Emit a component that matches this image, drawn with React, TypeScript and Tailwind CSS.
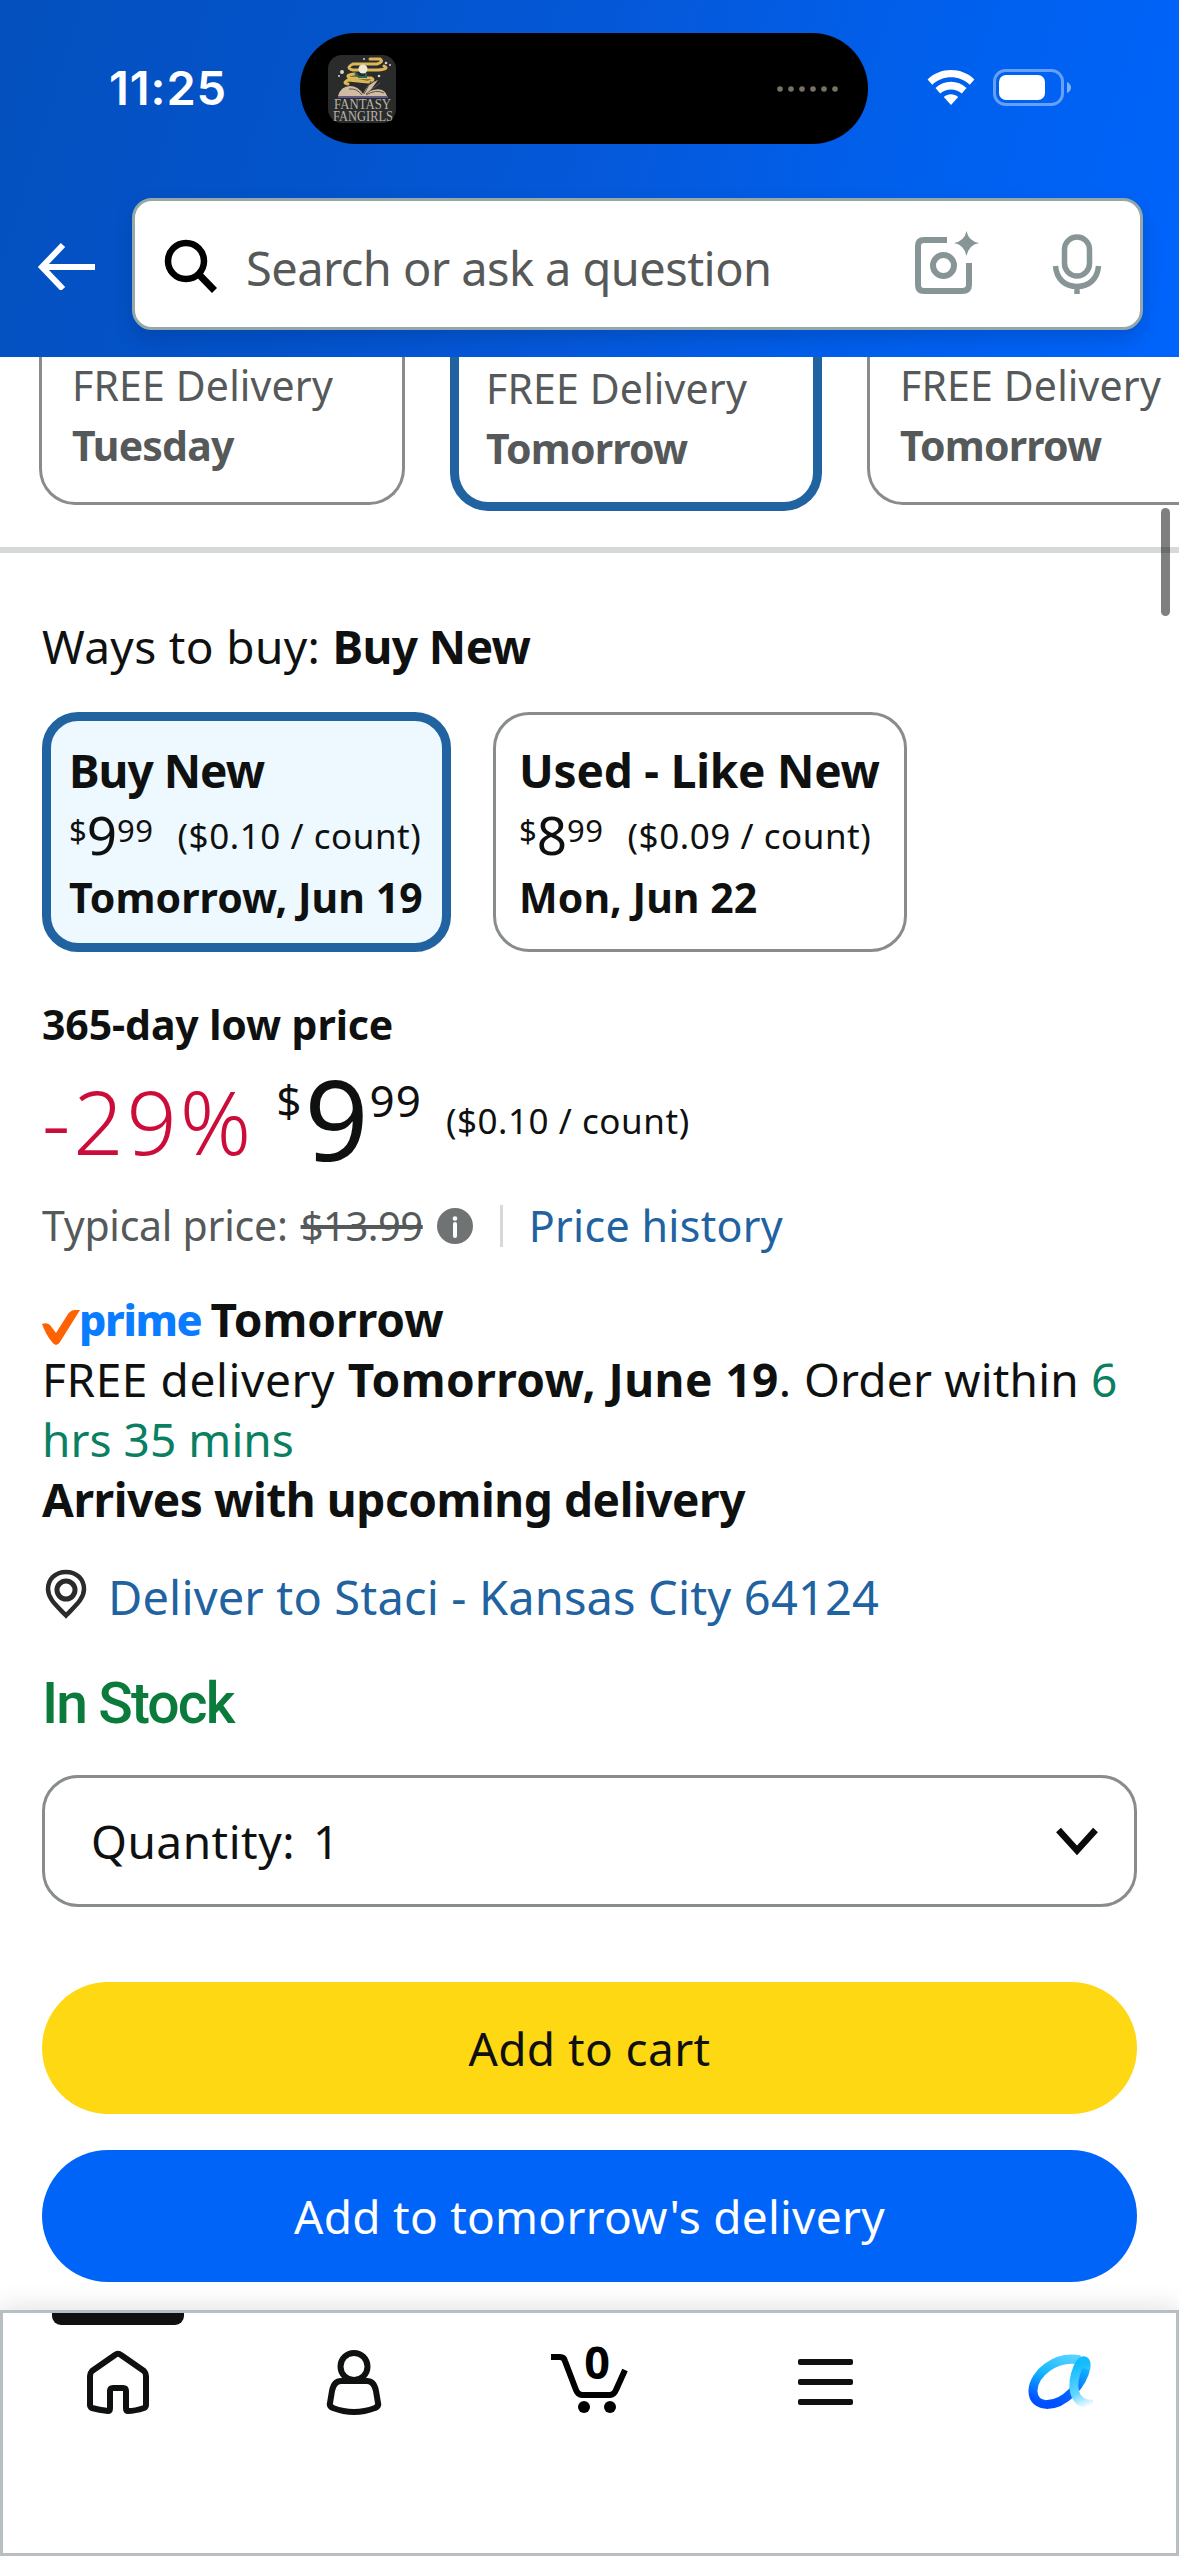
import { ReactNode } from "react";

const otherOffers = [
  { when: "Tuesday", selected: false },
  { when: "Tomorrow", selected: true },
  { when: "Tomorrow", selected: false },
];

const buyOptions = [
  { title: "Buy New", whole: "9", cents: "99", unit: "($0.10 / count)", date: "Tomorrow, Jun 19", selected: true },
  { title: "Used - Like New", whole: "8", cents: "99", unit: "($0.09 / count)", date: "Mon, Jun 22", selected: false },
];

export default function App() {
  return (
    <div className="relative flex h-[2556px] w-[1179px] flex-col overflow-hidden bg-white font-['Noto_Sans',sans-serif] text-[#0f1111]">
      <Header />
      <OfferStrip />
      <main className="flex flex-1 flex-col px-[42px]">
        <h2 className="mt-[63px] text-[46px] leading-[60px] tracking-[0.35px] whitespace-nowrap">
          Ways to buy: <b className="tracking-[-0.6px]">Buy New</b>
        </h2>
        <div className="mt-[36px] flex gap-[42px]">
          {buyOptions.map((option) => (
            <BuyBox key={option.title} {...option} />
          ))}
        </div>
        <PriceBlock />
        <Delivery />
        <div className="mt-[43px] font-[Roboto,sans-serif] text-[57px] leading-[68px] font-medium tracking-[-1.9px] text-[#0b7b3c]">
          In Stock
        </div>
        <div className="mt-[37px] flex h-[132px] items-center justify-between rounded-[36px] border-[3px] border-[#888c8c] pr-[36px] pl-[46px]">
          <span className="text-[46px] tracking-[0.5px] whitespace-pre">
            Quantity:<span className="ml-[18px]">1</span>
          </span>
          <svg className="mt-[2px] h-[32px] w-[42px]" viewBox="0 0 42 32" fill="none" stroke="#0a0a0a" strokeWidth="6.5">
            <path d="M2.500 4L21 24.500L39.500 4" />
          </svg>
        </div>
        <button className="mt-[75px] h-[132px] rounded-full bg-[#ffd814] text-[46px] tracking-[0.4px]">Add to cart</button>
        <button className="mt-[36px] h-[132px] rounded-full bg-[#0064f9] text-[46px] tracking-[0.25px] text-white">
          Add to tomorrow's delivery
        </button>
      </main>
      <div className="absolute top-[508px] right-[9px] h-[108px] w-[9px] rounded-full bg-black/50" />
      <TabBar />
    </div>
  );
}

function Header() {
  return (
    <header className="h-[357px] shrink-0 bg-[linear-gradient(107deg,#0450be_0%,#0353cb_28%,#0559db_52%,#0060ee_76%,#0064fc_100%)]">
      <div className="flex h-[198px] items-start">
        <div className="mt-[59px] w-[300px] pl-[109px] font-[Inter,sans-serif] text-[47px] leading-[57px] font-semibold tracking-[0.9px] text-white">
          11:25
        </div>
        <div className="mt-[33px] flex h-[111px] w-[568px] items-center justify-between rounded-full bg-black pr-[29px] pl-[28px]">
          <PodcastArt />
          <svg className="h-[8px] w-[64px]" viewBox="0 0 64 8" fill="#787266">
            {[5, 16, 27, 38, 49, 60].map((x) => (
              <circle key={x} cx={x} cy="4" r="2.800" />
            ))}
          </svg>
        </div>
        <svg className="mt-[68px] ml-[58px] h-[38px] w-[50px]" viewBox="0 0 50 38" fill="white">
          <path d="M1.600 11.500C14-1.200 36-1.200 48.400 11.500L43.800 16.800C33.500 6.800 16.500 6.800 6.200 16.800Z" />
          <path d="M9.500 20C18 11.800 32 11.800 40.500 20L35.800 25.500C29.500 20 20.500 20 14.200 25.500Z" />
          <path d="M17.800 29C22 25.300 28 25.300 32.200 29L25 37Z" />
        </svg>
        <svg className="mt-[69px] ml-[17px] h-[37px] w-[78px]" viewBox="0 0 78 37">
          <rect x="1.500" y="1.500" width="68" height="34" rx="11" fill="none" stroke="white" strokeOpacity="0.400" strokeWidth="3" />
          <rect x="6" y="6" width="46" height="25" rx="7" fill="white" />
          <path d="M74 13Q78 15 78 18.500Q78 22 74 24Z" fill="white" fillOpacity="0.500" />
        </svg>
      </div>
      <div className="flex items-center pl-[37px]">
        <svg className="mt-[4px] h-[48px] w-[58px]" viewBox="0 0 58 48" fill="none" stroke="white" strokeWidth="6">
          <path d="M58 25H5M26 3L5 25L26 47" />
        </svg>
        <div className="ml-[37px] flex h-[132px] w-[1011px] items-center rounded-[20px] border-[3px] border-[#95a8a8] bg-white pl-[28px] text-[#575959] shadow-[0_9px_18px_rgba(0,40,110,0.25)]">
          <svg className="h-[58px] w-[56px]" viewBox="0 0 56 58" fill="none" stroke="black" strokeWidth="6.500">
            <circle cx="23" cy="26" r="18" />
            <path d="M36 39.500L51.500 55.500" strokeWidth="7" />
          </svg>
          <span className="mt-[9px] ml-[27px] flex-1 text-[47px] tracking-[-0.58px] whitespace-nowrap">
            Search or ask a question
          </span>
          <svg className="h-[66px] w-[66px]" viewBox="0 0 66 66" fill="none" stroke="#879596" strokeWidth="6">
            <path d="M33 9H10Q4 9 4 15V54Q4 60 10 60H48Q55 60 55 54V32" />
            <circle cx="29.500" cy="34.500" r="10.500" />
            <path d="M52.500 0Q54.500 10 65 12Q54.500 14 52.500 25Q50.500 14 40 12Q50.500 10 52.500 0Z" fill="#879596" stroke="none" />
          </svg>
          <svg className="mr-[38px] ml-[72px] h-[62px] w-[50px]" viewBox="0 0 50 62" fill="none" stroke="#879596" strokeWidth="5.500">
            <rect x="12.500" y="4" width="25" height="39" rx="12.500" />
            <path d="M3.500 33C4.500 46 13 53.500 25 53.500S45.500 46 46.500 33M25 53V61" />
          </svg>
        </div>
      </div>
    </header>
  );
}

function PodcastArt() {
  return (
    <svg className="h-[68px] w-[68px] overflow-visible" viewBox="0 0 68 68">
      <rect width="68" height="68" rx="14" fill="#2a2c2c" />
      <g fill="none" stroke="#dcb757" strokeWidth="3" strokeLinecap="round">
        <path d="M42 4H52Q56 7 49 9H25Q17 13 25 15H50Q62 14 56 11" />
        <path d="M27 19Q16 20 22 23H43Q48 25 40 27L20 25Q14 28 20 29" />
      </g>
      <circle cx="35" cy="14" r="4.500" fill="#f0e8d5" />
      <path d="M27 18L31 22H38V18" fill="none" stroke="#28685a" strokeWidth="2" />
      <path d="M10 41Q13 31 22 31Q30 31 35 39Q39 29 50 25L42 36Q56 31 59 41Z" fill="#d0bba5" />
      <path d="M36 39L43 26M38 39L52 28M34 40Q29 33 21 34M38 40Q48 34 56 38" stroke="#5f5349" fill="none" />
      <path d="M10 42H60" stroke="#7368a0" strokeWidth="1.500" />
      <g fill="#d8d1c8">
        <circle cx="14" cy="17" r="2" />
        <circle cx="11" cy="21" r="1" />
        <circle cx="36" cy="4" r="1" />
        <circle cx="58" cy="8" r="1.300" />
        <circle cx="62" cy="10" r="1" />
        <circle cx="51" cy="21" r="1.300" />
      </g>
      <g fill="#b8b2a9" fontFamily="Liberation Serif" fontSize="15">
        <text x="6" y="54" textLength="57" lengthAdjust="spacingAndGlyphs">FANTASY</text>
        <text x="5" y="65.500" textLength="60" lengthAdjust="spacingAndGlyphs">FANGIRLS</text>
      </g>
    </svg>
  );
}

function OfferStrip() {
  return (
    <div className="flex h-[196px] shrink-0 items-start overflow-hidden border-b-[6px] border-[#d5d9d9] pl-[39px] text-[41px] leading-[60px] whitespace-nowrap text-[#565959]">
      {otherOffers.map((offer, i) =>
        offer.selected ? (
          <div key={i} className="mr-[45px] ml-[45px] h-[154px] w-[372px] shrink-0 rounded-b-[38px] border-[9px] border-t-0 border-[#2162a1] pl-[27px]">
            <OfferText when={offer.when} />
          </div>
        ) : (
          <div key={i} className="h-[148px] w-[366px] shrink-0 rounded-b-[36px] border-[3px] border-t-0 border-[#888c8c] pl-[30px]">
            <div className="-mt-[3px]">
              <OfferText when={offer.when} />
            </div>
          </div>
        ),
      )}
    </div>
  );
}

function OfferText({ when }: { when: string }) {
  return (
    <div className="pt-px">
      <div className="tracking-[0.15px]">FREE Delivery</div>
      <div className="font-bold tracking-[-0.8px]">{when}</div>
    </div>
  );
}

function BuyBox({ title, whole, cents, unit, date, selected }: (typeof buyOptions)[number]) {
  return (
    <div
      className={`flex h-[240px] flex-col rounded-[36px] whitespace-nowrap ${
        selected ? "w-[409px] border-[9px] border-[#2162a1] bg-[#edf8ff] pt-[19px] pl-[18px]" : "w-[414px] border-[3px] border-[#888c8c] pt-[25px] pl-[23px]"
      }`}
    >
      <div className={`text-[46px] leading-[60px] font-bold ${selected ? "tracking-[-1px]" : "tracking-[-0.2px]"}`}>{title}</div>
      <div className="mt-[2px] flex h-[66px] items-start">
        <sup className="top-0 mt-[8px] text-[31px] leading-[40px]">$</sup>
        <span className="text-[53px] leading-[66px]">{whole}</span>
        <sup className="top-0 mt-[8px] text-[31px] leading-[40px] tracking-[0.5px]">{cents}</sup>
        <span className="mt-[10px] ml-[24px] text-[35px] leading-[48px] tracking-[0.55px]">{unit}</span>
      </div>
      <div className="-mt-px text-[41px] leading-[60px] font-bold tracking-[0.05px]">{date}</div>
    </div>
  );
}

function PriceBlock() {
  return (
    <section className="whitespace-nowrap">
      <div className="mt-[42px] text-[41px] leading-[60px] font-bold tracking-[-0.1px]">365-day low price</div>
      <div className="flex h-[118px] items-start">
        <span className="mt-[17px] text-[88px] leading-[100px] font-light tracking-[3px] text-[#cc0c39]">-29%</span>
        <span className="mt-[16px] ml-[22px] text-[44px] leading-[60px]">$</span>
        <span className="mt-[5px] ml-[3px] text-[112px] leading-[118px]">9</span>
        <span className="mt-[16px] ml-px text-[44px] leading-[60px] tracking-[1px]">99</span>
        <span className="mt-[43px] ml-[24px] text-[35px] leading-[48px] tracking-[0.55px]">($0.10 / count)</span>
      </div>
      <div className="mt-[24px] flex h-[60px] items-center text-[41px] text-[#565959]">
        <span className="tracking-[-0.25px]">Typical price:</span>
        <s className="ml-[13px] text-[40px] tracking-[-0.5px]">$13.99</s>
        <svg className="ml-[14px] h-[36px] w-[36px]" viewBox="0 0 36 36">
          <circle cx="18" cy="18" r="18" fill="#6f7373" />
          <circle cx="18" cy="10.500" r="2.300" fill="white" />
          <path d="M18 16V28" stroke="white" strokeWidth="4" strokeLinecap="round" />
        </svg>
        <div className="ml-[27px] h-[42px] w-[3px] bg-[#d5d9d9]" />
        <a className="ml-[26px] text-[43px] tracking-[0.3px] text-[#2162a1]">Price history</a>
      </div>
    </section>
  );
}

function Delivery() {
  return (
    <section className="mt-[33px] text-[46px] leading-[60px]">
      <div className="flex h-[60px] items-center font-bold whitespace-nowrap">
        <svg className="mt-[17px] h-[36px] w-[38px]" viewBox="0 0 38 36" fill="#ff6200">
          <path d="M0 14Q5 12 8 15L14 23L26 4Q29 0 33 0H38L18 32Q14 38 10 32Q4 25 0 14Z" />
        </svg>
        <span className="mt-[2px] -ml-px text-[43px] font-extrabold tracking-[-1.3px] text-[#0a7cff]">prime</span>
        <span className="ml-[9px]">Tomorrow</span>
      </div>
      <p className="-mr-[20px] tracking-[0.45px]">
        <span className="tracking-[0.6px]">FREE delivery </span>
        <b>Tomorrow, June 19</b>. <span className="tracking-[0.2px]">Order within </span>
        <Green>6</Green>
        <br />
        <span className="tracking-[0.05px]">
          <Green>hrs 35 mins</Green>
        </span>
      </p>
      <div className="font-bold tracking-[-0.43px]">Arrives with upcoming delivery</div>
      <div className="mt-[38px] flex items-start whitespace-nowrap text-[#2162a1]">
        <svg className="mt-[2px] ml-[3px] h-[50px] w-[42px]" viewBox="0 0 42 50" fill="none" stroke="#2b2b2b">
          <path d="M21 3C10 3 3 10.500 3 20C3 30 12 37 21 46.500C30 37 39 30 39 20C39 10.500 32 3 21 3Z" strokeWidth="4.500" />
          <circle cx="21" cy="21" r="9" strokeWidth="5" />
        </svg>
        <a className="ml-[21px] text-[47px] tracking-[0.15px]">Deliver to Staci - Kansas City 64124</a>
      </div>
    </section>
  );
}

function Green({ children }: { children: ReactNode }) {
  return <span className="text-[#0a7f62]">{children}</span>;
}

function TabBar() {
  return (
    <nav className="h-[246px] shrink-0 border-[3px] border-[#b8bfc2] bg-white shadow-[0_-3px_24px_rgba(15,17,17,0.12)]">
      <div className="-mx-[3px] grid grid-cols-5">
        <div className="flex flex-col items-center">
          <div className="h-[12px] w-[132px] rounded-b-[9px] bg-[#0f1111]" />
          <svg className="mt-[25px] h-[64px] w-[64px]" viewBox="0 0 64 64" fill="none" stroke="#0f1111" strokeWidth="6" strokeLinejoin="round">
            <path d="M4 26Q4 23 6 21L29 5Q32 2.500 35 5L58 21Q60 23 60 26V55Q60 57 58 58Q49 61 42 61Q40 61 40 58V41Q40 38 37 38H27Q24 38 24 41V58Q24 61 22 61Q13 60 6 58Q4 57 4 55Z" />
          </svg>
        </div>
        <div className="flex justify-center pt-[37px]">
          <svg className="h-[66px] w-[56px]" viewBox="0 0 56 66" fill="none" stroke="#0f1111" strokeWidth="6">
            <circle cx="28" cy="16.500" r="13.500" />
            <path d="M15 31H41Q48 31 50 41L52 53Q53 56 49 58Q28 66 7 58Q3 56 4 53L6 41Q8 31 15 31Z" />
          </svg>
        </div>
        <div className="flex justify-center pt-[31px]">
          <svg className="h-[72px] w-[78px] overflow-visible" viewBox="0 0 78 72">
            <path d="M1 13H10Q14 13 15 17L26 46Q28 51 32 51H60Q64 51 66 46L75 26" fill="none" stroke="black" strokeWidth="6" />
            <circle cx="34" cy="63" r="6" />
            <circle cx="60" cy="63" r="6" />
            <text x="47" y="35" textAnchor="middle" fontFamily="Noto Sans" fontWeight="700" fontSize="45">0</text>
          </svg>
        </div>
        <div className="flex flex-col items-center gap-[14px] pt-[46px]">
          <div className="h-[6px] w-[55px] rounded-[2px] bg-[#0f1111]" />
          <div className="h-[6px] w-[55px] rounded-[2px] bg-[#0f1111]" />
          <div className="h-[6px] w-[55px] rounded-[2px] bg-[#0f1111]" />
        </div>
        <div className="flex justify-center pt-[41px]">
          <AlexaMark />
        </div>
      </div>
    </nav>
  );
}

function AlexaMark() {
  return (
    <svg className="h-[56px] w-[68px]" viewBox="0 0 68 56" fill="none" strokeWidth="9">
      <defs>
        <linearGradient id="loop" x1="44" y1="2" x2="22" y2="52" gradientUnits="userSpaceOnUse">
          <stop offset="0" stopColor="#57d3ff" />
          <stop offset="0.500" stopColor="#12b4ff" />
          <stop offset="1" stopColor="#0050ff" />
        </linearGradient>
        <linearGradient id="edge" x1="30" y1="50" x2="60" y2="12" gradientUnits="userSpaceOnUse">
          <stop offset="0" stopColor="#0050ff" />
          <stop offset="0.450" stopColor="#0a6cff" />
          <stop offset="1" stopColor="#0fbcff" />
        </linearGradient>
        <linearGradient id="tail" x1="50" y1="12" x2="66" y2="51" gradientUnits="userSpaceOnUse">
          <stop offset="0" stopColor="#13bcff" />
          <stop offset="0.600" stopColor="#63d5ff" />
          <stop offset="1" stopColor="#63d5ff" stopOpacity="0" />
        </linearGradient>
      </defs>
      <path d="M53 6C28 1 7 20 6 36C5.500 46 12 50.500 21 50.500" stroke="url(#loop)" />
      <path d="M20 50.500C38 50.500 56 30 59 13" stroke="url(#edge)" />
      <path d="M58.500 15C61 5 55 4 51 13C44 30 44 50.500 66 50.500" stroke="url(#tail)" />
    </svg>
  );
}
